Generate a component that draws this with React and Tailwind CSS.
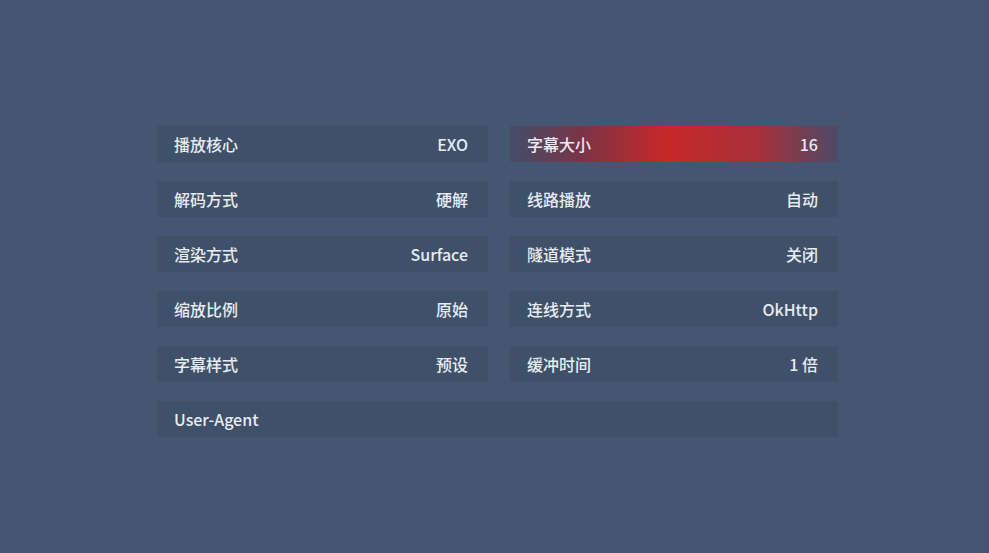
import React from "react";

const left = [
  ["播放核心", "EXO"],
  ["解码方式", "硬解"],
  ["渲染方式", "Surface"],
  ["缩放比例", "原始"],
  ["字幕样式", "预设"],
];
const right = [
  ["字幕大小", "16"],
  ["线路播放", "自动"],
  ["隧道模式", "关闭"],
  ["连线方式", "OkHttp"],
  ["缓冲时间", "1 倍"],
];

function Row({ label, value, active }) {
  return (
    <div
      className={
        "h-[36px] flex items-center justify-between pl-[17px] pr-[20px] " +
        (active
          ? "bg-[linear-gradient(to_right,#434d68_0%,#7a3446_22%,#c8282a_48%,#a8303a_75%,#4d4a66_100%)]"
          : "bg-[#3f5069]")
      }
    >
      <span>{label}</span>
      <span>{value}</span>
    </div>
  );
}

export default function App() {
  return (
    <div
      className="w-[989px] h-[553px] bg-[#445671] text-[#e8ecf1] text-[16px] font-medium overflow-hidden"
      style={{ fontFamily: '"Noto Sans CJK SC", "Noto Sans", sans-serif' }}
    >
      <div className="pt-[126px] pl-[157px] w-[838px]">
        <div className="grid grid-cols-[331px_328px] gap-x-[22px] gap-y-[19px]">
          {left.map((l, i) => (
            <React.Fragment key={i}>
              <Row label={l[0]} value={l[1]} />
              <Row label={right[i][0]} value={right[i][1]} active={i === 0} />
            </React.Fragment>
          ))}
          <div className="col-span-2">
            <Row label="User-Agent" value="" />
          </div>
        </div>
      </div>
    </div>
  );
}
